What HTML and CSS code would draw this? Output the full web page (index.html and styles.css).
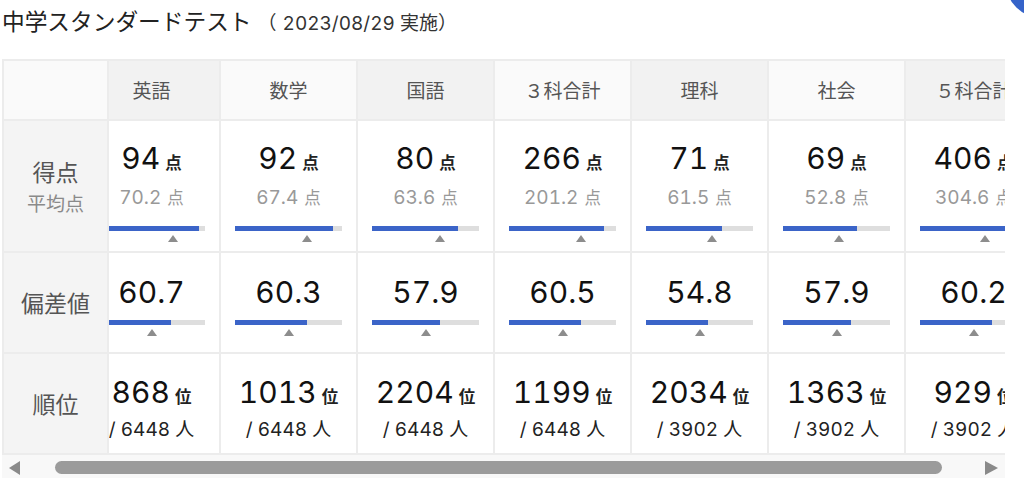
FILE: index.html
```html
<!DOCTYPE html>
<html lang="ja">
<head>
<meta charset="utf-8">
<title>中学スタンダードテスト</title>
<link rel="stylesheet" href="styles.css">
</head>
<body>
<div class="page">
  <h1 class="title">中学スタンダードテスト<span class="date"><span class="paren">（</span>2023/08/29 実施）</span></h1>

  <div class="board">
    <div class="col-label">
      <div class="cell head corner"></div>
      <div class="cell score label"><span class="lbl">得点</span><span class="sub">平均点</span></div>
      <div class="cell dev label"><span class="lbl">偏差値</span></div>
      <div class="cell rank label"><span class="lbl">順位</span></div>
    </div>

    <div class="viewport">
      <div class="track">

        <div class="col">
          <div class="cell head">英語</div>
          <div class="cell score data">
            <div class="num">94<span class="unit">点</span></div>
            <div class="avg">70.2<span class="unit-s">点</span></div>
            <div class="bar"><div class="fill" style="width:94%"></div></div>
            <div class="mark" style="margin-left:calc(70.2% - 5px)"></div>
          </div>
          <div class="cell dev data">
            <div class="num">60.7</div>
            <div class="bar"><div class="fill" style="width:67.83%"></div></div>
            <div class="mark" style="margin-left:calc(50% - 5px)"></div>
          </div>
          <div class="cell rank data">
            <div class="num">868<span class="unit">位</span></div>
            <div class="of">/ 6448 人</div>
          </div>
        </div>

        <div class="col">
          <div class="cell head alt">数学</div>
          <div class="cell score data">
            <div class="num">92<span class="unit">点</span></div>
            <div class="avg">67.4<span class="unit-s">点</span></div>
            <div class="bar"><div class="fill" style="width:92%"></div></div>
            <div class="mark" style="margin-left:calc(67.4% - 5px)"></div>
          </div>
          <div class="cell dev data">
            <div class="num">60.3</div>
            <div class="bar"><div class="fill" style="width:67.17%"></div></div>
            <div class="mark" style="margin-left:calc(50% - 5px)"></div>
          </div>
          <div class="cell rank data">
            <div class="num">1013<span class="unit">位</span></div>
            <div class="of">/ 6448 人</div>
          </div>
        </div>

        <div class="col">
          <div class="cell head">国語</div>
          <div class="cell score data">
            <div class="num">80<span class="unit">点</span></div>
            <div class="avg">63.6<span class="unit-s">点</span></div>
            <div class="bar"><div class="fill" style="width:80%"></div></div>
            <div class="mark" style="margin-left:calc(63.6% - 5px)"></div>
          </div>
          <div class="cell dev data">
            <div class="num">57.9</div>
            <div class="bar"><div class="fill" style="width:63.17%"></div></div>
            <div class="mark" style="margin-left:calc(50% - 5px)"></div>
          </div>
          <div class="cell rank data">
            <div class="num">2204<span class="unit">位</span></div>
            <div class="of">/ 6448 人</div>
          </div>
        </div>

        <div class="col">
          <div class="cell head alt">３科合計</div>
          <div class="cell score data">
            <div class="num">266<span class="unit">点</span></div>
            <div class="avg">201.2<span class="unit-s">点</span></div>
            <div class="bar"><div class="fill" style="width:88.67%"></div></div>
            <div class="mark" style="margin-left:calc(67.07% - 5px)"></div>
          </div>
          <div class="cell dev data">
            <div class="num">60.5</div>
            <div class="bar"><div class="fill" style="width:67.5%"></div></div>
            <div class="mark" style="margin-left:calc(50% - 5px)"></div>
          </div>
          <div class="cell rank data">
            <div class="num">1199<span class="unit">位</span></div>
            <div class="of">/ 6448 人</div>
          </div>
        </div>

        <div class="col">
          <div class="cell head">理科</div>
          <div class="cell score data">
            <div class="num">71<span class="unit">点</span></div>
            <div class="avg">61.5<span class="unit-s">点</span></div>
            <div class="bar"><div class="fill" style="width:71%"></div></div>
            <div class="mark" style="margin-left:calc(61.5% - 5px)"></div>
          </div>
          <div class="cell dev data">
            <div class="num">54.8</div>
            <div class="bar"><div class="fill" style="width:58%"></div></div>
            <div class="mark" style="margin-left:calc(50% - 5px)"></div>
          </div>
          <div class="cell rank data">
            <div class="num">2034<span class="unit">位</span></div>
            <div class="of">/ 3902 人</div>
          </div>
        </div>

        <div class="col">
          <div class="cell head alt">社会</div>
          <div class="cell score data">
            <div class="num">69<span class="unit">点</span></div>
            <div class="avg">52.8<span class="unit-s">点</span></div>
            <div class="bar"><div class="fill" style="width:69%"></div></div>
            <div class="mark" style="margin-left:calc(52.8% - 5px)"></div>
          </div>
          <div class="cell dev data">
            <div class="num">57.9</div>
            <div class="bar"><div class="fill" style="width:63.17%"></div></div>
            <div class="mark" style="margin-left:calc(50% - 5px)"></div>
          </div>
          <div class="cell rank data">
            <div class="num">1363<span class="unit">位</span></div>
            <div class="of">/ 3902 人</div>
          </div>
        </div>

        <div class="col">
          <div class="cell head">５科合計</div>
          <div class="cell score data">
            <div class="num">406<span class="unit">点</span></div>
            <div class="avg">304.6<span class="unit-s">点</span></div>
            <div class="bar"><div class="fill" style="width:81.2%"></div></div>
            <div class="mark" style="margin-left:calc(60.92% - 5px)"></div>
          </div>
          <div class="cell dev data">
            <div class="num">60.2</div>
            <div class="bar"><div class="fill" style="width:67%"></div></div>
            <div class="mark" style="margin-left:calc(50% - 5px)"></div>
          </div>
          <div class="cell rank data">
            <div class="num">929<span class="unit">位</span></div>
            <div class="of">/ 3902 人</div>
          </div>
        </div>

      </div>
    </div>
  </div>

  <div class="hscroll">
    <span class="arrow arrow-left"></span>
    <span class="thumb"></span>
    <span class="arrow arrow-right"></span>
  </div>
</div>
<div class="fab"></div>
</body>
</html>
```

FILE: styles.css
```css
* { box-sizing: border-box; }

body {
  margin: 0;
  background: #fff;
  color: #111;
  font-family: Inter, "Noto Sans CJK JP", sans-serif;
  font-variant-numeric: tabular-nums;
}

.page {
  padding: 6px 0 0 2px;
}

.title {
  margin: 0 0 19px 0;
  font-size: 22.7px;
  line-height: 32px;
  font-weight: 400;
  color: #222;
}

.title .date {
  font-size: 19px;
  color: #333;
}

.title .paren {
  margin-left: 6px;
  margin-right: 6px;
}

/* table */
.board {
  display: flex;
  width: 1003px;
  border-top: 2px solid #ececec;
  border-left: 2px solid #ececec;
}

.col-label {
  flex: none;
  width: 105px;
}

.viewport {
  flex: 1;
  min-width: 0;
  overflow: hidden;
}

.track {
  display: flex;
  margin-left: -25px;
}

.col {
  flex: none;
  width: 137px;
}

.cell {
  border-right: 2px solid #ececec;
  border-bottom: 2px solid #ececec;
  background: #fff;
}

.head {
  height: 60px;
  display: flex;
  align-items: center;
  justify-content: center;
  padding-bottom: 2px;
  font-size: 19px;
  color: #555;
  background: #f2f2f2;
  white-space: nowrap;
}

.head.alt { background: #fafafa; }
.head.corner { background: #fafafa; }

.score { height: 132px; }
.dev { height: 101px; }
.rank { height: 101px; }

.label {
  display: flex;
  flex-direction: column;
  align-items: center;
  justify-content: center;
  gap: 8px;
  padding-top: 3px;
  background: #f4f4f4;
}

.lbl {
  font-size: 23px;
  line-height: 26px;
  color: #555;
}

.sub {
  font-size: 19px;
  line-height: 21px;
  color: #8a8a8a;
}

.data {
  padding: 0 14px;
  text-align: center;
  white-space: nowrap;
}

.num {
  font-size: 30px;
  line-height: 32px;
  color: #111;
}

.unit {
  margin-left: 5px;
  font-family: "Noto Sans CJK JP", sans-serif;
  font-size: 16.5px;
  font-weight: 700;
  color: #222;
}

.unit-s {
  margin-left: 6px;
  font-family: "Noto Sans CJK JP", sans-serif;
  font-size: 16.5px;
}

.score.data { padding-top: 21px; }
.dev.data { padding-top: 23px; }
.rank.data { padding-top: 22px; }

.avg {
  margin-top: 8px;
  font-size: 19px;
  line-height: 22px;
  color: #999;
}

.of {
  margin-top: 7px;
  font-size: 19px;
  line-height: 22px;
  color: #222;
}

.bar {
  height: 5px;
  background: #dedede;
}

.score .bar { margin-top: 17px; }
.dev .bar { margin-top: 12px; }

.fill {
  height: 100%;
  background: #3b64c8;
}

.mark {
  width: 0;
  height: 0;
  margin-top: 4px;
  border-left: 5px solid transparent;
  border-right: 5px solid transparent;
  border-bottom: 7px solid #8d8d8d;
}

/* horizontal scrollbar */
.hscroll {
  display: flex;
  align-items: center;
  width: 1003px;
  height: 23px;
  padding: 2px 0 0 7px;
  background: #f8f8f8;
}

.arrow {
  flex: none;
  width: 0;
  height: 0;
  border-top: 7px solid transparent;
  border-bottom: 7px solid transparent;
}

.arrow-left {
  border-right: 11px solid #8a8a8a;
}

.arrow-right {
  margin-left: 43px;
  border-left: 13px solid #8a8a8a;
}

.thumb {
  flex: none;
  width: 887px;
  height: 13px;
  margin-left: 35px;
  border-radius: 7px;
  background: #9b9b9b;
}

.fab {
  position: fixed;
  left: 1005px;
  top: -59px;
  width: 78px;
  height: 78px;
  border-radius: 50%;
  background: #3563c9;
}
```
